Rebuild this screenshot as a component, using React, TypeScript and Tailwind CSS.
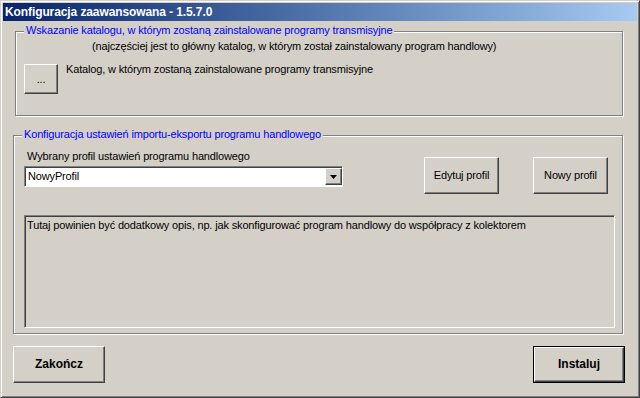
const raised =
  'border border-t-white border-l-white border-r-[#404040] border-b-[#404040] shadow-[inset_-1px_-1px_0_#808080] bg-[#d4d0c8]';
const sunken =
  'border border-t-[#808080] border-l-[#808080] border-r-white border-b-white shadow-[inset_1px_1px_0_#404040]';
const groupBox =
  'relative shrink-0 border border-[#808080] shadow-[inset_1px_1px_0_#fff,1px_1px_0_#fff]';

function GroupLabel({ children }: { children: React.ReactNode }) {
  return (
    <span className="absolute left-[8px] -top-[8px] px-[2px] bg-[#d4d0c8] text-[#0000ff] whitespace-nowrap">
      {children}
    </span>
  );
}

export default function App() {
  return (
    <div className="w-[640px] h-[398px] overflow-hidden flex flex-col p-[2px] bg-[#d4d0c8] border border-t-[#d4d0c8] border-l-[#d4d0c8] border-r-[#404040] border-b-[#404040] shadow-[inset_1px_1px_0_#fff,inset_-1px_-1px_0_#808080] font-['Liberation_Sans',Arial,sans-serif] text-[11px] leading-[13px] tracking-[-0.15px] text-black">
      <div className="h-[18px] shrink-0 flex items-center pl-[2px] bg-linear-to-r from-[#0a246a] to-[#a6caf0] text-white font-bold text-[12px] tracking-[-0.1px]">
        Konfiguracja zaawansowana - 1.5.7.0
      </div>

      <div className={`${groupBox} mt-[10px] ml-[12px] w-[608px] h-[85px] flex flex-col`}>
        <GroupLabel>Wskazanie katalogu, w którym zostaną zainstalowane programy transmisyjne</GroupLabel>
        <p className="mt-[8px] ml-[76px] whitespace-nowrap">
          (najczęściej jest to główny katalog, w którym został zainstalowany program handlowy)
        </p>
        <div className="mt-[11px] ml-[8px] flex items-start gap-[8px]">
          <button className={`${raised} w-[34px] h-[30px] flex items-center justify-center`}>...</button>
          <span className="-mt-px whitespace-nowrap">
            Katalog, w którym zostaną zainstalowane programy transmisyjne
          </span>
        </div>
      </div>

      <div className={`${groupBox} mt-[19px] ml-[10px] w-[610px] h-[199px] flex flex-col`}>
        <GroupLabel>Konfiguracja ustawień importu-eksportu programu handlowego</GroupLabel>
        <div className="mt-[14px] ml-[10px] flex items-start">
          <div className="w-[319px] flex flex-col">
            <span className="pl-[3px] whitespace-nowrap">Wybrany profil ustawień programu handlowego</span>
            <div className={`${sunken} mt-[3px] h-[21px] bg-white flex items-center`}>
              <span className="flex-1 pl-[3px]">NowyProfil</span>
              <div className={`${raised} w-[17px] h-[17px] flex items-center justify-center`}>
                <svg width="7" height="4" viewBox="0 0 7 4">
                  <path d="M0 0h7L3.5 4z" fill="#000" />
                </svg>
              </div>
            </div>
          </div>
          <button className={`${raised} ml-[81px] mt-[7px] w-[75px] h-[37px]`}>Edytuj profil</button>
          <button className={`${raised} ml-[34px] mt-[7px] w-[75px] h-[37px]`}>Nowy profil</button>
        </div>
        <div className={`${sunken} mt-[21px] ml-[10px] w-[591px] h-[113px] pt-[3px] pl-[2px]`}>
          Tutaj powinien być dodatkowy opis, np. jak skonfigurować program handlowy do współpracy z kolektorem
        </div>
      </div>

      <div className="mt-[12px] ml-[10px] mr-[12px] flex justify-between">
        <button className={`${raised} w-[92px] h-[37px] font-bold text-[12px] tracking-normal`}>Zakończ</button>
        <div className="w-[92px] h-[37px] border border-black flex">
          <button className={`${raised} flex-1 font-bold text-[12px] tracking-normal`}>Instaluj</button>
        </div>
      </div>
    </div>
  );
}
